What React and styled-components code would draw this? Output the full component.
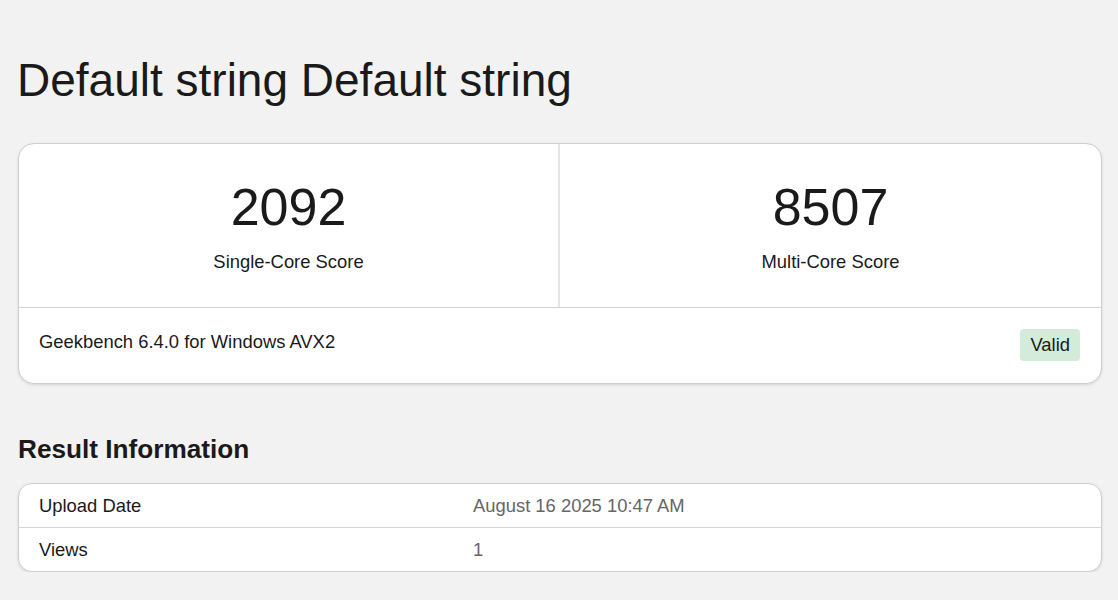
import React from 'react'
import styled, {createGlobalStyle} from 'styled-components'

const GlobalStyle = createGlobalStyle`
  body {
    margin: 0;
    background: #f2f2f2;
    font-family: "Liberation Sans", Arial, sans-serif;
    color: #1a1a1a;
  }
`

const Page = styled.main`
  padding: 0 16px 0 18px;
`

const Title = styled.h1`
  margin: 0 0 0 -1px;
  padding-top: 52px;
  font-size: 46px;
  font-weight: 400;
  line-height: 56px;
  color: #1a1a1a;
`

const Card = styled.section`
  margin-top: 35px;
  background: #fff;
  border: 1px solid #cfcfcf;
  border-radius: 16px;
  box-shadow: 0 1px 3px rgba(0, 0, 0, 0.12);
  overflow: hidden;
`

const ScoreRow = styled.div`
  display: grid;
  grid-template-columns: 539px 1fr;
  border-bottom: 1px solid #d4d4d4;
`

const ScoreCell = styled.div`
  height: 163px;
  display: flex;
  flex-direction: column;
  align-items: center;
  padding-top: 33px;
  box-sizing: border-box;
  & + & {
    border-left: 2px solid #e6e6e6;
  }
`

const ScoreValue = styled.div`
  font-size: 52px;
  line-height: 60px;
`

const ScoreLabel = styled.div`
  margin-top: 14px;
  font-size: 18.4px;
  line-height: 22px;
`

const Footer = styled.div`
  display: flex;
  justify-content: space-between;
  align-items: flex-start;
  padding: 22px 21px 20px 20px;
  height: 75px;
  box-sizing: border-box;
`

const Version = styled.div`
  font-size: 18.4px;
  line-height: 24px;
`

const Badge = styled.span`
  align-self: center;
  margin-top: -4px;
  padding: 5px 10px;
  border-radius: 4px;
  background: #d3ebd9;
  font-size: 18.4px;
  line-height: 22px;
`

const SectionTitle = styled.h2`
  margin: 49px 0 0;
  font-size: 26.2px;
  font-weight: 700;
  line-height: 32px;
`

const Table = styled.div`
  margin-top: 18px;
  background: #fff;
  border: 1px solid #cfcfcf;
  border-radius: 14px;
  box-shadow: 0 1px 3px rgba(0, 0, 0, 0.12);
  overflow: hidden;
`

const Row = styled.div`
  display: grid;
  grid-template-columns: 434px 1fr;
  height: 43px;
  align-items: center;
  padding-left: 20px;
  font-size: 18.4px;
  & + & {
    border-top: 1px solid #d4d4d4;
  }
`

const Value = styled.span`
  color: #666;
`

const rows = [
  {label: 'Upload Date', value: 'August 16 2025 10:47 AM'},
  {label: 'Views', value: '1'}
]

export default function App() {
  return (
    <Page>
      <GlobalStyle />
      <Title>Default string Default string</Title>
      <Card>
        <ScoreRow>
          <ScoreCell>
            <ScoreValue>2092</ScoreValue>
            <ScoreLabel>Single-Core Score</ScoreLabel>
          </ScoreCell>
          <ScoreCell>
            <ScoreValue>8507</ScoreValue>
            <ScoreLabel>Multi-Core Score</ScoreLabel>
          </ScoreCell>
        </ScoreRow>
        <Footer>
          <Version>Geekbench 6.4.0 for Windows AVX2</Version>
          <Badge>Valid</Badge>
        </Footer>
      </Card>
      <SectionTitle>Result Information</SectionTitle>
      <Table>
        {rows.map(r => (
          <Row key={r.label}>
            <span>{r.label}</span>
            <Value>{r.value}</Value>
          </Row>
        ))}
      </Table>
    </Page>
  )
}
